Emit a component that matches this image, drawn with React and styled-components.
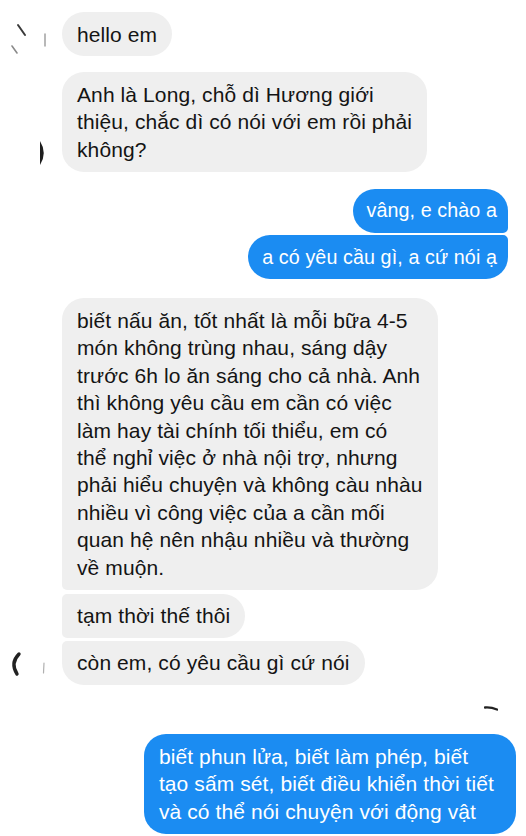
import styled, { createGlobalStyle } from "styled-components";

const GlobalStyle = createGlobalStyle`
  html, body {
    margin: 0;
    padding: 0;
    background: #ffffff;
  }
  body {
    font-family: "Liberation Sans", Arial, sans-serif;
  }
`

const Thread = styled.div`
  width: 526px;
  height: 836px;
  padding-top: 12px;
  box-sizing: border-box;
  display: flex;
  flex-direction: column;
  overflow: hidden;
  background: #fff;
`

const Row = styled.div`
  display: flex;
  align-items: flex-end;
  margin-top: ${props => props.$gap || 0}px;
  justify-content: ${props => props.$mine ? "flex-end" : "flex-start"};
  padding-right: ${props => props.$mine ? (props.$edge ?? 18) : 0}px;
`

const Avatar = styled.div`
  width: 62px;
  height: 44px;
  flex-shrink: 0;

  svg {
    display: block;
  }
`

const radius = (pos, mine) => {
  const big = 22
  const small = 5
  const top = pos === "middle" || pos === "last" ? small : big
  const bottom = pos === "middle" || pos === "first" ? small : big
  return mine
    ? `${big}px ${top}px ${bottom}px ${big}px`
    : `${top}px ${big}px ${big}px ${bottom}px`
}

const Bubble = styled.div`
  font-size: ${props => props.$size || 21}px;
  line-height: 27.4px;
  padding: 8.5px ${props => props.$padRight || 15}px 8.5px ${props => props.$padLeft || 15}px;
  white-space: pre-line;
  border-radius: ${props => radius(props.$pos, props.$mine)};
  background: ${props => props.$mine ? "#1b8cf2" : "#efefef"};
  color: ${props => props.$mine ? "#ffffff" : "#141414"};
  letter-spacing: 0.1px;
`

const SeenRow = styled.div`
  display: flex;
  justify-content: flex-end;
  padding-right: 28px;
  margin: 20px 0 23px;

  svg {
    display: block;
  }
`

function Mark({ kind }) {
  if (kind === "first") {
    return (
      <svg width="62" height="44" viewBox="0 0 62 44">
        <path d="M18 13 L25 23" stroke="#3a3a3a" strokeWidth="2" strokeLinecap="round" />
        <path d="M12 34 L17 41" stroke="#8a8a8a" strokeWidth="1.6" strokeLinecap="round" />
        <path d="M45 22 L45 34" stroke="#9a9a9a" strokeWidth="1.4" strokeLinecap="round" />
      </svg>
    )
  }
  if (kind === "half") {
    return (
      <svg width="62" height="44" viewBox="0 0 62 44">
        <path d="M40 13 Q47.5 25 40 37 Z" fill="#1e1e1e" />
      </svg>
    )
  }
  return (
    <svg width="62" height="44" viewBox="0 0 62 44">
      <path d="M19 13 Q10 22 17 33" stroke="#222" strokeWidth="3.4" fill="none" strokeLinecap="round" />
      <path d="M44 22 L43.5 32" stroke="#b0b0b0" strokeWidth="1.2" strokeLinecap="round" />
    </svg>
  )
}

export default function App() {
  return (
    <>
      <GlobalStyle />
      <Thread>
        <Row>
          <Avatar><Mark kind="first" /></Avatar>
          <Bubble $pos="single">hello em</Bubble>
        </Row>
        <Row $gap={16}>
          <Avatar><Mark kind="half" /></Avatar>
          <Bubble $pos="single">
            {"Anh là Long, chỗ dì Hương giới\nthiệu, chắc dì có nói với em rồi phải\nkhông?"}
          </Bubble>
        </Row>
        <Row $gap={17} $mine>
          <Bubble $mine $pos="first" $size={19.7} $padLeft={13} $padRight={11}>vâng, e chào a</Bubble>
        </Row>
        <Row $gap={2} $mine>
          <Bubble $mine $pos="last" $size={19.7} $padLeft={14} $padRight={11}>a có yêu cầu gì, a cứ nói ạ</Bubble>
        </Row>
        <Row $gap={19}>
          <Avatar />
          <Bubble $pos="first">
            {"biết nấu ăn, tốt nhất là mỗi bữa 4-5\nmón không trùng nhau, sáng dậy\ntrước 6h lo ăn sáng cho cả nhà. Anh\nthì không yêu cầu em cần có việc\nlàm hay tài chính tối thiểu, em có\nthể nghỉ việc ở nhà nội trợ, nhưng\nphải hiểu chuyện và không càu nhàu\nnhiều vì công việc của a cần mối\nquan hệ nên nhậu nhiều và thường\nvề muộn."}
          </Bubble>
        </Row>
        <Row $gap={4}>
          <Avatar />
          <Bubble $pos="middle">tạm thời thế thôi</Bubble>
        </Row>
        <Row $gap={3}>
          <Avatar><Mark kind="arc" /></Avatar>
          <Bubble $pos="last">còn em, có yêu cầu gì cứ nói</Bubble>
        </Row>
        <SeenRow>
          <svg width="14" height="6" viewBox="0 0 14 6">
            <path d="M1 2.5 Q7 2 13 4.5" stroke="#222" strokeWidth="2.4" fill="none" strokeLinecap="round" />
          </svg>
        </SeenRow>
        <Row $mine $edge={10}>
          <Bubble $mine $pos="single" $padRight={22}>
            {"biết phun lửa, biết làm phép, biết\ntạo sấm sét, biết điều khiển thời tiết\nvà có thể nói chuyện với động vật"}
          </Bubble>
        </Row>
      </Thread>
    </>
  )
}
